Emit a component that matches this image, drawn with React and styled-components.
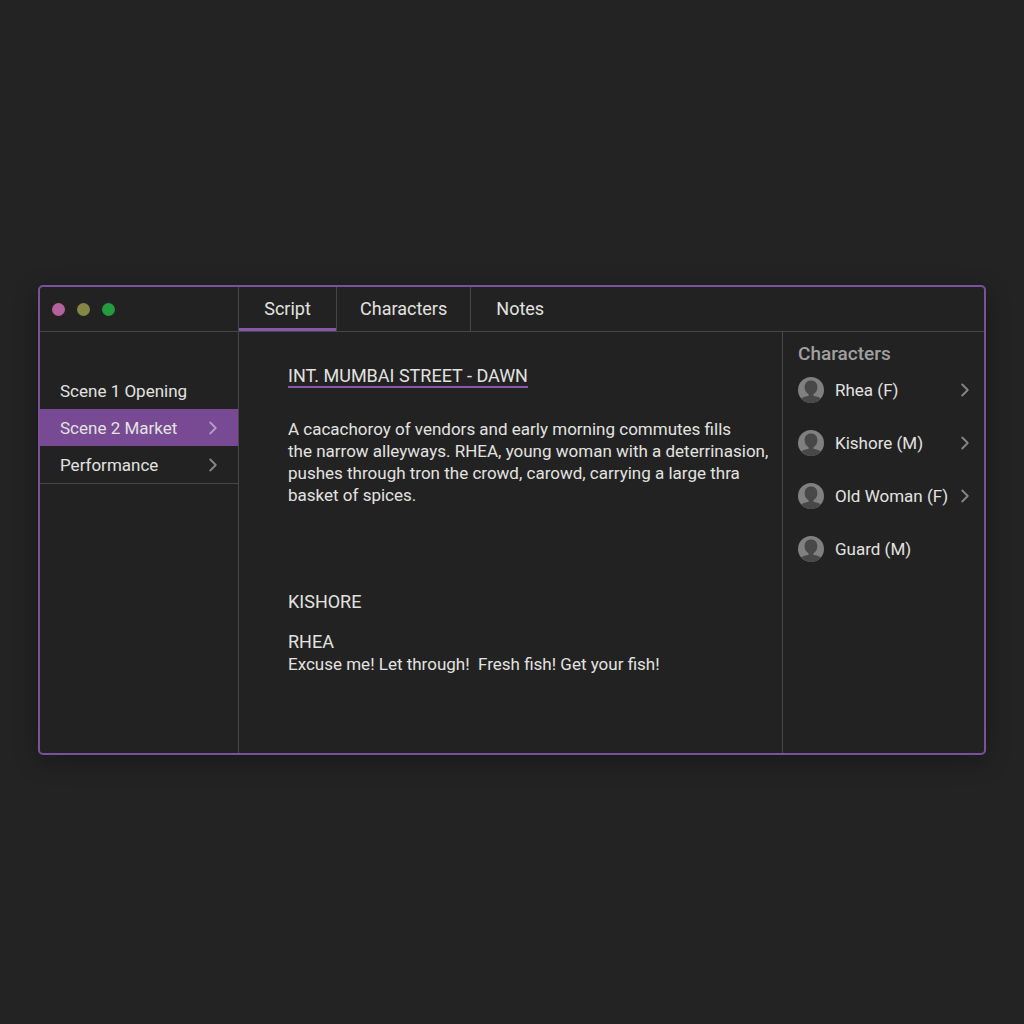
import React, { useState } from 'react';
import styled, { createGlobalStyle } from 'styled-components';
import { ChevronRight } from 'lucide-react';

const tabs = ['Script', 'Characters', 'Notes'];

const scenes = [
  { name: 'Scene 1 Opening', nested: false },
  { name: 'Scene 2 Market', nested: true },
  { name: 'Performance', nested: true },
];

const characters = [
  { name: 'Rhea (F)', nested: true },
  { name: 'Kishore (M)', nested: true },
  { name: 'Old Woman (F)', nested: true },
  { name: 'Guard (M)', nested: false },
];

const Avatar = () => (
  <AvatarIcon viewBox="0 0 26 26" aria-hidden="true">
    <circle cx="13" cy="13" r="13" fill="#808080" />
    <path
      d="M3.2 21.5C5 19.9 8 19.7 10.6 18.8V17.2C8.2 16 6.6 13.4 6.6 10.2C6.6 6 9.2 3.4 13 3.4S19.4 6 19.4 10.2C19.4 13.4 17.8 16 15.4 17.2V18.8C18 19.7 21 19.9 22.8 21.5A13 13 0 0 1 3.2 21.5Z"
      fill="#484848"
    />
  </AvatarIcon>
);

const App = () => {
  const [tab, setTab] = useState('Script');
  const [scene, setScene] = useState('Scene 2 Market');

  return (
    <Page>
      <GlobalStyle />
      <Window>
        <TitleBar>
          <Dots>
            <Dot $color="#b4629b" />
            <Dot $color="#858844" />
            <Dot $color="#259b40" />
          </Dots>
          <Tabs>
            {tabs.map((name) => (
              <Tab key={name} type="button" $active={name === tab} onClick={() => setTab(name)}>
                {name}
              </Tab>
            ))}
          </Tabs>
        </TitleBar>

        <Body>
          <Sidebar>
            <SceneList>
              {scenes.map(({ name, nested }) => (
                <SceneButton
                  key={name}
                  type="button"
                  $active={name === scene}
                  onClick={() => setScene(name)}
                >
                  {name}
                  {nested && <Chevron size={22} />}
                </SceneButton>
              ))}
            </SceneList>
          </Sidebar>

          <Script>
            <Heading>INT. MUMBAI STREET - DAWN</Heading>
            <Action>
              A cacachoroy of vendors and early morning commutes fills
              <br />
              the narrow alleyways. RHEA, young woman with a deterrinasion,
              <br />
              pushes through tron the crowd, carowd, carrying a large thra
              <br />
              basket of spices.
            </Action>
            <Dialogue>
              <Speaker>KISHORE</Speaker>
              <div>
                <Speaker>RHEA</Speaker>
                <Line>Excuse me! Let through!&nbsp; Fresh fish! Get your fish!</Line>
              </div>
            </Dialogue>
          </Script>

          <CastPanel>
            <CastTitle>Characters</CastTitle>
            <CastList>
              {characters.map(({ name, nested }) => (
                <CastButton key={name} type="button">
                  <Avatar />
                  <CastName>{name}</CastName>
                  {nested && <Chevron size={22} />}
                </CastButton>
              ))}
            </CastList>
          </CastPanel>
        </Body>
      </Window>
    </Page>
  );
};

// STYLED COMPONENTS

const GlobalStyle = createGlobalStyle`
  * {
    box-sizing: border-box;
  }

  body {
    margin: 0;
    background: #232323;
    color: #e2e2e0;
    font-family: Roboto, sans-serif;
    font-size: 17px;
    line-height: 22px;
  }

  button {
    border: none;
    background: none;
    color: inherit;
    font: inherit;
    text-align: left;
    cursor: pointer;
  }
`;

const Page = styled.div`
  min-height: 100vh;
  padding: 16px 38px 0;
  display: flex;
  align-items: center;
`;

const Window = styled.div`
  width: 100%;
  background: #222222;
  border: 2px solid #7b509c;
  border-radius: 5px;
  overflow: hidden;
  box-shadow: 0 6px 24px rgba(0, 0, 0, 0.3);
`;

const TitleBar = styled.div`
  display: flex;
  height: 45px;
  border-bottom: 1px solid #484848;
`;

const Dots = styled.div`
  width: 199px;
  display: flex;
  align-items: center;
  gap: 12px;
  padding: 0 12px;
  border-right: 1px solid #484848;
`;

const Dot = styled.span`
  width: 13px;
  height: 13px;
  border-radius: 50%;
  background: ${({ $color }) => $color};
`;

const Tabs = styled.nav`
  display: flex;
`;

const Tab = styled.button`
  min-width: 98px;
  padding: 0 23px;
  font-size: 18px;
  text-align: center;
  box-shadow: ${({ $active }) => ($active ? 'inset 0 -3px #8858ad' : 'none')};

  &:not(:last-child) {
    border-right: 1px solid #484848;
  }
`;

const Body = styled.div`
  display: grid;
  grid-template-columns: 199px minmax(0, 1fr) 202px;
  min-height: 421px;
`;

const Sidebar = styled.aside`
  padding-top: 40px;
  border-right: 1px solid #484848;
`;

const SceneList = styled.div`
  display: flex;
  flex-direction: column;
  border-bottom: 1px solid #484848;
`;

const SceneButton = styled.button`
  display: flex;
  align-items: center;
  justify-content: space-between;
  height: 37px;
  padding: 0 14px 0 20px;
  background: ${({ $active }) => ($active ? '#774a93' : 'transparent')};
`;

const Chevron = styled(ChevronRight)`
  flex: none;
  color: #ffffff;
  opacity: 0.45;
`;

const Script = styled.main`
  padding: 33px 12px 24px 49px;
`;

const Heading = styled.h1`
  width: fit-content;
  margin: 0;
  font-size: 18px;
  font-weight: 400;
  line-height: 21px;
  border-bottom: 2px solid #8858ad;
`;

const Action = styled.p`
  margin: 30px 0 0;
`;

const Dialogue = styled.div`
  margin-top: 85px;
  display: flex;
  flex-direction: column;
  gap: 18px;
`;

const Speaker = styled.p`
  margin: 0;
  font-size: 18px;
`;

const Line = styled.p`
  margin: 0;
`;

const CastPanel = styled.aside`
  padding: 11px 8px 24px 15px;
  border-left: 1px solid #484848;
`;

const CastTitle = styled.h2`
  margin: 0;
  color: #a0a0a0;
  font-size: 19px;
  font-weight: 500;
`;

const CastList = styled.div`
  display: flex;
  flex-direction: column;
  gap: 27px;
  margin-top: 12px;
`;

const CastButton = styled.button`
  display: flex;
  align-items: center;
  height: 26px;
  padding: 0;
`;

const AvatarIcon = styled.svg`
  flex: none;
  width: 26px;
  height: 26px;
`;

const CastName = styled.span`
  flex: 1;
  margin-left: 11px;
  white-space: nowrap;
`;

export default App;
